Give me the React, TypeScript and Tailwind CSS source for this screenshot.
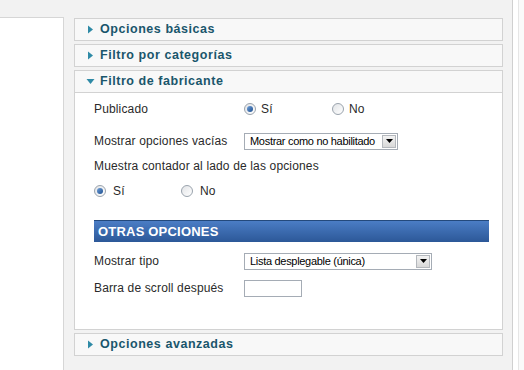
import React from "react";

function Arrow({ open }: { open?: boolean }) {
  return open ? (
    <svg width="9" height="9" viewBox="0 0 9 9" className="shrink-0">
      <path d="M0.5 2 L8.5 2 L4.5 7 Z" fill="#2f8aa6" />
    </svg>
  ) : (
    <svg width="9" height="9" viewBox="0 0 9 9" className="shrink-0">
      <path d="M2 0.5 L7 4.5 L2 8.5 Z" fill="#2f8aa6" />
    </svg>
  );
}

function Header({ title, open }: { title: string; open?: boolean }) {
  return (
    <div className="flex items-center gap-[5px] h-[21px] pl-[11px] bg-[#f8f8f8]">
      <Arrow open={open} />
      <span className="text-[12.5px] font-bold tracking-[0.55px] text-[#1a566c]">{title}</span>
    </div>
  );
}

function Radio({ checked }: { checked?: boolean }) {
  return (
    <span className="flex items-center justify-center w-[12px] h-[12px] rounded-full border border-[#9aa3ad] bg-gradient-to-br from-[#e2e4e7] to-[#ffffff] shrink-0">
      {checked && <span className="w-[6px] h-[6px] rounded-full bg-gradient-to-br from-[#6f9fd8] to-[#1d4f8f]" />}
    </span>
  );
}

function Select({ value, width }: { value: string; width: string }) {
  return (
    <div className={`flex items-center justify-between h-[17px] border border-[#a5acb5] bg-white pl-[5px] pr-[1px] ${width}`}>
      <span className="text-[11px] text-black leading-none whitespace-nowrap tracking-[-0.3px]">{value}</span>
      <span className="flex items-center justify-center w-[14px] h-[13px] border border-[#b4b8bd] bg-gradient-to-b from-[#f3f3f3] to-[#d8d8d8] shrink-0">
        <svg width="7" height="4" viewBox="0 0 7 4">
          <path d="M0 0 L7 0 L3.5 4 Z" fill="#000" />
        </svg>
      </span>
    </div>
  );
}

export default function App() {
  return (
    <div className="flex w-[524px] h-[370px] overflow-hidden bg-[#f2f2f2] text-[#222]" style={{ fontFamily: '"Liberation Sans", Arial, sans-serif' }}>
      <div className="w-[64px] pt-[17px] shrink-0">
        <div className="h-full bg-white border-t border-r border-[#d6d6d6]" />
      </div>

      <div className="w-[448px] shrink-0 pt-[18px] pl-[10px] pr-[9px] flex flex-col gap-[3px]">
        <div className="border border-[#d2d2d2]">
          <Header title="Opciones básicas" />
        </div>
        <div className="border border-[#d2d2d2]">
          <Header title="Filtro por categorías" />
        </div>
        <div className="border border-[#d2d2d2] bg-white">
          <div className="border-b border-[#d2d2d2]">
            <Header title="Filtro de fabricante" open />
          </div>
          <div className="h-[236px] pl-[19px] pr-[13px] text-[12px] tracking-[0.15px] text-[#2a2a2a]">
            <div className="flex items-center h-[32px]">
              <span className="w-[150px]">Publicado</span>
              <span className="flex items-center gap-[5px] w-[88px]"><Radio checked /><span>Sí</span></span>
              <span className="flex items-center gap-[5px]"><Radio /><span>No</span></span>
            </div>
            <div className="flex items-center h-[32px]">
              <span className="w-[150px]">Mostrar opciones vacías</span>
              <Select value="Mostrar como no habilitado" width="w-[154px]" />
            </div>
            <div className="flex items-center h-[18px]">Muestra contador al lado de las opciones</div>
            <div className="flex items-center h-[32px]">
              <span className="flex items-center gap-[7px] w-[87px]"><Radio checked /><span>Sí</span></span>
              <span className="flex items-center gap-[7px]"><Radio /><span>No</span></span>
            </div>
            <div className="mt-[13px] h-[22px] flex items-center pl-[4px] border-t border-[#23497c] bg-gradient-to-b from-[#4b7dc5] to-[#2c5898]">
              <span className="text-[13px] font-bold text-white tracking-[0.2px]">OTRAS OPCIONES</span>
            </div>
            <div className="flex items-center h-[26px] mt-[6px]">
              <span className="w-[150px]">Mostrar tipo</span>
              <Select value="Lista desplegable (única)" width="w-[188px]" />
            </div>
            <div className="flex items-center h-[28px]">
              <span className="w-[150px]">Barra de scroll después</span>
              <span className="w-[58px] h-[17px] border border-[#a5acb5] bg-white" />
            </div>
          </div>
        </div>
        <div className="border border-[#d2d2d2]">
          <Header title="Opciones avanzadas" />
        </div>
      </div>

      <div className="flex-1 border-l border-[#d0d0d0] bg-white flex">
        <div className="w-[5px]" />
        <div className="flex-1 border-l border-[#e6e6e6] bg-[#fafafa]" />
      </div>
    </div>
  );
}
